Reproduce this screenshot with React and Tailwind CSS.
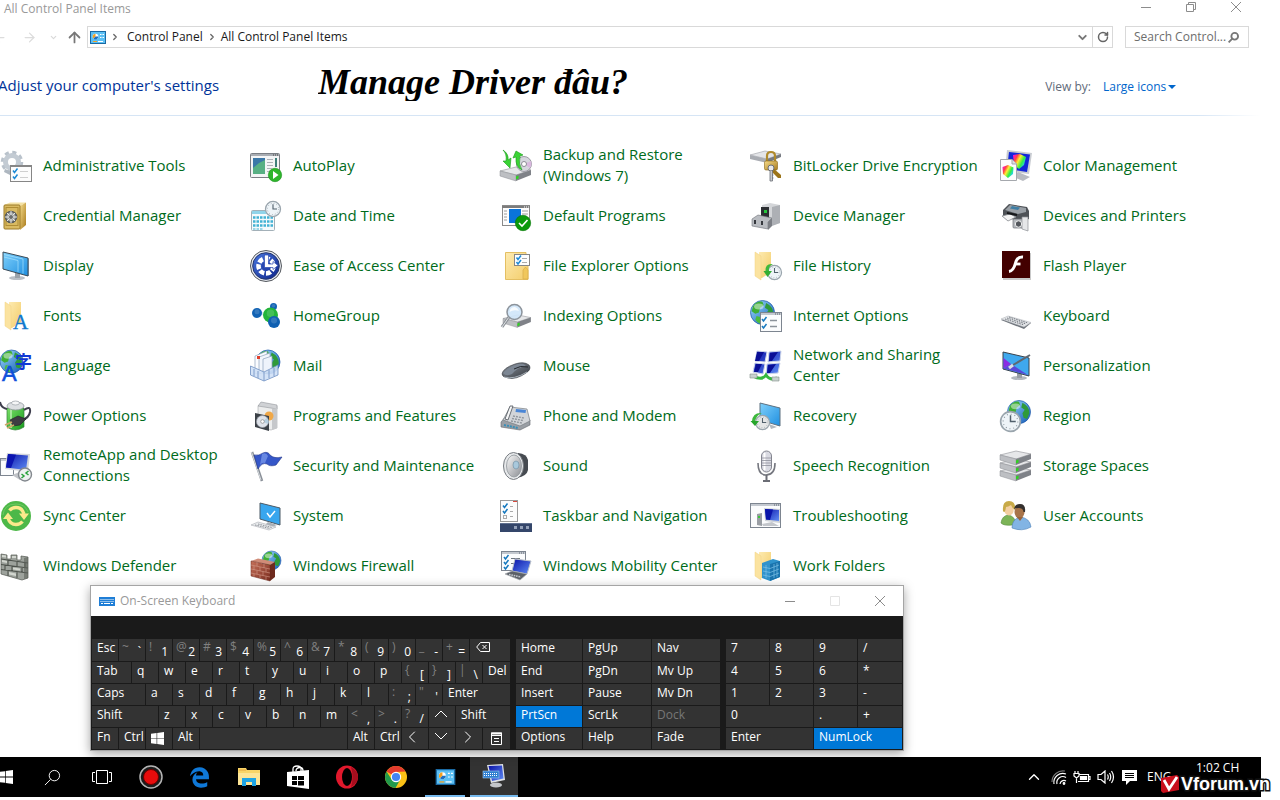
import { FaEdgeLegacy } from "react-icons/fa";
import {
  ArrowLeft,
  ArrowRight,
  ArrowUp,
  ChevronDown,
  ChevronLeft,
  ChevronRight,
  ChevronUp,
  RotateCw,
  Search,
} from "lucide-react";

/* shared gradients, referenced by id from every icon */
function Gradients() {
  const list = [
    ["sea", "#9fe0fb", "#1258b8"],
    ["screen", "#7fd0fb", "#1f8fe0"],
    ["navy", "#0a12a8", "#5f8df5"],
    ["gold", "#f6dc8a", "#a87a1c"],
    ["folder", "#fdeab0", "#f3cd6a"],
    ["steel", "#fafafa", "#8b8e94"],
    ["dark", "#8d939b", "#33383f"],
    ["green", "#7ae068", "#169a1c"],
    ["access", "#4a78e0", "#0c2288"],
    ["brick", "#c4705a", "#7c2e20"],
  ];
  return (
    <svg className="absolute h-0 w-0" aria-hidden="true">
      <defs>
        {list.map(([id, from, to]) => (
          <linearGradient key={id} id={id} x1="0" y1="0" x2="1" y2="1">
            <stop offset="0" stopColor={from} />
            <stop offset="1" stopColor={to} />
          </linearGradient>
        ))}
        <linearGradient id="spectrum" x1="0" y1="0" x2="1" y2="0.6">
          <stop offset="0" stopColor="#f0f" />
          <stop offset="0.3" stopColor="#f44" />
          <stop offset="0.5" stopColor="#fe3" />
          <stop offset="0.75" stopColor="#3e4" />
          <stop offset="1" stopColor="#2cf" />
        </linearGradient>
      </defs>
    </svg>
  );
}

/* pieces used by several icons */
function Globe({ cx, cy, r }) {
  return (
    <g transform={`translate(${cx} ${cy}) scale(${r / 10})`}>
      <circle r="10" fill="url(#sea)" stroke="#1c56a8" strokeWidth="0.6" />
      <path d="M-8 -5 Q-5 -10 0 -9 L1 -6 L-2 -4 L-3 0 L-6 1 L-9 -1Z" fill="#3fae35" />
      <path d="M3 -8 Q9 -5 9 1 L7 6 L4 5 L3 1 L5 -2 L2 -4Z" fill="#2f9a3a" />
      <path d="M-5 3 L-1 4 L1 7 L-2 9.4 Q-5 8 -6 6Z" fill="#4cbc3c" />
      <ellipse cx="-3" cy="-5" rx="4" ry="2.5" fill="#fff" opacity="0.45" />
    </g>
  );
}

function Clock({ cx, cy, r, face = "#eef4f8" }) {
  return (
    <g transform={`translate(${cx} ${cy}) scale(${r / 10})`} fill="none">
      <circle r="9.4" fill={face} stroke="#9aa5ad" strokeWidth="1.6" />
      <circle r="7" stroke="#8d979f" strokeWidth="1" strokeDasharray="1 2.66" />
      <path d="M0 -6 V0 H5" stroke="#51606c" strokeWidth="1.4" />
    </g>
  );
}

function Tick({ x, y, color = "#1d8ad6" }) {
  return (
    <path
      d={`M${x} ${y + 2} l1.5 2 l3 -4`}
      fill="none"
      stroke={color}
      strokeWidth="1.5"
    />
  );
}

function Pane({ x, y, w, h }) {
  return (
    <g>
      <rect x={x + 0.5} y={y + 0.5} width={w - 1} height={h - 1} fill="#fbfcfd" stroke="#7d8590" />
      <rect x={x + 1} y={y + 1} width={w - 2} height="2" fill="#c3c8cf" />
      <path d={`M${x + w - 7} ${y + 2} h5`} stroke="#5b6470" strokeDasharray="1 1" />
    </g>
  );
}

function Folder() {
  return (
    <g>
      <path d="M9 2 H21 V22 L12 28 H9Z" fill="url(#folder)" />
      <path d="M5 2 L11 6 V30 L5 26Z" fill="#fbe3a0" stroke="#f0d080" strokeWidth="0.5" />
    </g>
  );
}

function Drive({ y }) {
  return (
    <g>
      <path d={`M0 ${y + 4} L16 ${y} L31 ${y + 3} L16 ${y + 8}Z`} fill="#e6e7e9" stroke="#8f9196" strokeWidth="0.6" />
      <path d={`M0 ${y + 4} L16 ${y + 8} V${y + 14} L0 ${y + 9}Z`} fill="#bdbfc3" stroke="#8f9196" strokeWidth="0.5" />
      <path d={`M16 ${y + 8} L31 ${y + 3} V${y + 8} L16 ${y + 14}Z`} fill="#7f8288" />
      <path d={`M16 ${y + 9.5} l2.5 -1 v3 l-2.5 1z`} fill="#2fd321" />
    </g>
  );
}

function Globule({ cx, cy, r, fill }) {
  return (
    <g>
      <circle cx={cx} cy={cy} r={r} fill={fill} />
      <circle cx={cx} cy={cy - r / 4} r={r / 2} fill="#fff" opacity="0.15" />
    </g>
  );
}

const icons = {
  admin: (
    <>
      <circle cx="12" cy="12" r="9.5" fill="none" stroke="#b9c2cb" strokeWidth="3.5" strokeDasharray="4 3.46" />
      <circle cx="12" cy="12" r="6.5" fill="none" stroke="#c3cbd3" strokeWidth="5" />
      <path d="M5 19 L10 21 V25 L4 22Z" fill="#aeb7c0" />
      <rect x="10.5" y="15.5" width="21" height="16" fill="#fcfcfc" stroke="#868686" />
      <path d="M11 16 H31" stroke="#868686" strokeWidth="2" />
      <Tick x={13} y={18.5} />
      <Tick x={13} y={24.5} />
      <path d="M20 21.5 H28 M20 27.5 H28" stroke="#cfcfcf" />
    </>
  ),
  autoplay: (
    <>
      <rect x="0.5" y="3.5" width="29" height="24" rx="1" fill="#f4f5f6" stroke="#7a7e84" />
      <path d="M1 5 H29" stroke="#a9adb3" strokeWidth="2" />
      <path d="M23 5 h5" stroke="#444" strokeDasharray="1 1" />
      <rect x="3" y="8" width="12" height="16" fill="#3b78a8" />
      <path d="M3 18 L9 13 L15 10 V24 H3Z" fill="#58b084" />
      <path d="M17 9.5 h6 M17 12.5 h6 M17 15.5 h6 M17 18.5 h5 M17 21.5 h3" stroke="#aeb2b7" />
      <rect x="25" y="8" width="2" height="9" fill="#3f7f7a" />
      <circle cx="25" cy="25" r="6.7" fill="#2db52a" stroke="#1d9020" strokeWidth="0.6" />
      <path d="M23 21 L28.5 25 L23 29Z" fill="#fff" />
    </>
  ),
  backup: (
    <>
      <Drive y={17} />
      <circle cx="24" cy="14" r="7.5" fill="#d6d6de" stroke="#9c9ca4" />
      <path d="M24 14 L31 11 A7.5 7.5 0 0 1 30 18Z" fill="#d9b8de" />
      <circle cx="24" cy="14" r="2.5" fill="#fff" stroke="#8c8c94" />
      <path d="M3 0 Q9 4 8 10 L11 8 L10 18 L3 11 L6 11 Q7 4 3 0Z" fill="#3ad335" stroke="#189a1a" strokeWidth="0.6" />
      <path d="M13 8 L16 1 L23 5 L20 6 Q18 14 22 20 Q15 17 16 7Z" fill="#3ad335" stroke="#189a1a" strokeWidth="0.6" />
    </>
  ),
  bitlocker: (
    <>
      <path d="M0 5 L15 1 L31 4 L17 9Z" fill="#e4e5e8" stroke="#9c9ea4" strokeWidth="0.6" />
      <path d="M0 5 L17 9 V13 L0 9Z" fill="#a9acb2" />
      <path d="M17 9 L31 4 V7 L17 13Z" fill="#777b82" />
      <path d="M17 12 V6 Q17 2 21 2 Q25 2 25 6 V12" fill="none" stroke="#b08a2c" strokeWidth="2.2" />
      <rect x="14.5" y="11" width="13" height="9" rx="1.5" fill="url(#gold)" stroke="#8c6414" strokeWidth="0.6" />
      <path d="M23 18 L31 25 V28 H28 L21 21Z" fill="#9c7418" />
      <circle cx="21" cy="18" r="3" fill="#e8e9ec" stroke="#6b6f76" />
      <path d="M20 21 V31 H22.5 V21 M22 25 h1.5 M22 28 h1.5" fill="#c8cace" stroke="#6b6f76" strokeWidth="0.8" />
    </>
  ),
  color: (
    <>
      <path d="M7 0 L32 3 L29 24 L5 21Z" fill="#c9ccd2" />
      <path d="M9 2 L30 4.5 L27 22 L7 19Z" fill="#1327d8" />
      <path d="M18 22 L30 27 L23 31 L14 27Z" fill="#b8bbc1" />
      <path d="M13 5 L20 4 L26 7 L24 15 L19 19 L14 15Z" fill="url(#spectrum)" />
      <path d="M0.5 9.5 H12 L16.5 14 V30.5 H0.5Z" fill="#fcfcfd" stroke="#a5a8ad" />
      <path d="M12 9.5 V14 H16.5" fill="#dfe1e4" stroke="#a5a8ad" />
      <path d="M2.5 17 L8 15 L13.5 17.5 L13 24 L8 28 L3 24Z" fill="url(#spectrum)" />
    </>
  ),
  credential: (
    <>
      <path d="M4 5 L10 2.5 H26 L20 6Z" fill="#f4e2a4" />
      <path d="M20 6 L26 2.5 V25 L20 30Z" fill="url(#gold)" />
      <rect x="4" y="5" width="16" height="24" rx="1" fill="#d9ba62" stroke="#9c7a26" />
      <rect x="6" y="7.5" width="12" height="18" fill="none" stroke="#b08d34" />
      <circle cx="11" cy="17" r="5.5" fill="#a4a6a6" stroke="#595b5b" strokeWidth="1.6" />
      <path d="M11 11 V23 M5 17 H17 M7 13 L15 21 M15 13 L7 21" stroke="#e6e8e8" />
      <circle cx="11" cy="17" r="2" fill="#6b6d6d" />
    </>
  ),
  date: (
    <>
      <rect x="1.5" y="10.5" width="23" height="20" rx="1" fill="#f6fafc" stroke="#a3b0b8" />
      <rect x="2" y="11" width="22" height="3" fill="#90d4ea" />
      <path d="M3 17.5 H23 M3 21.5 H23 M3 25.5 H23" stroke="#43b2d4" strokeWidth="2.5" strokeDasharray="2.5 1" />
      <path d="M3 29 H13" stroke="#43b2d4" strokeDasharray="2.5 1" />
      <Clock cx={23} cy={9} r={8} />
    </>
  ),
  defaults: (
    <>
      <rect x="2.5" y="5.5" width="27" height="20" fill="#fdfdfd" stroke="#8a8a8a" />
      <path d="M2 7 H30" stroke="#7c7c7c" strokeWidth="2" />
      <path d="M24 7 h5" stroke="#fff" strokeDasharray="1 1" />
      <rect x="9" y="9" width="12" height="14" fill="#0a74da" />
      <path d="M4 11 h3 M4 14 h3 M4 17 h3 M4 20 h3 M22 11 h6 M22 14 h6" stroke="#9c9c9c" />
      <circle cx="23" cy="23" r="7.7" fill="#0b9a0b" stroke="#057505" strokeWidth="0.6" />
      <path d="M19 23 L22 26 L27.5 20" fill="none" stroke="#fff" strokeWidth="1.6" />
    </>
  ),
  device: (
    <>
      <path d="M12 5 L20 3 L30 5 V23 L20 26 L12 20Z" fill="#d4d6d9" />
      <path d="M22 7 L30 5 V23 L22 26Z" fill="#adb0b5" />
      <path d="M11 7 L19 7 V18 L11 17Z" fill="#2c2f32" />
      <rect x="14" y="10" width="3" height="3" fill="#25c73c" />
      <path d="M2 19 L8 15 L22 18 L18 22 V29 L2 26Z" fill="#b9bcc1" stroke="#6f7278" strokeWidth="0.6" />
      <path d="M18 22 L22 18 V26 L18 30Z" fill="#7b7e84" />
      <path d="M5 20 v4 M12 21 v4" stroke="#35383d" strokeWidth="2" />
    </>
  ),
  printers: (
    <>
      <path d="M3 10 L9 4 L27 7 L29 11 V19 L20 22 L3 16Z" fill="#4e5257" />
      <path d="M5 10 L10 5 L26 8 L26 12 L18 14Z" fill="#9aa0a6" />
      <path d="M12 6 L20 7.5 L18 10 L10 8.5Z" fill="#3f7ea4" />
      <path d="M2 16 L10 14 L16 17 L8 21Z" fill="#f4f4f4" stroke="#85898e" strokeWidth="0.8" />
      <path d="M7 13 L17 15" stroke="#16181a" strokeWidth="2" />
      <rect x="13" y="19" width="14" height="9" rx="1" fill="#b5b9bd" stroke="#6d7176" strokeWidth="0.7" />
      <path d="M22 17 H28 V31 L22 29Z" fill="#e6e7e9" stroke="#8e9196" strokeWidth="0.7" />
      <circle cx="18.5" cy="24" r="3.2" fill="#53575c" stroke="#eee" />
    </>
  ),
  display: (
    <>
      <ellipse cx="17" cy="28" rx="8" ry="2" fill="#b9bfc6" />
      <path d="M15 23 H20 V28 H15Z" fill="#9aa2aa" />
      <path d="M3 2 L28 8 V26 L3 19Z" fill="url(#screen)" stroke="#3c4a56" />
      <path d="M4 7 L18 10.5 V22 M4 4.5 L23 9 V23.5" fill="none" stroke="#a8e2fd" strokeWidth="0.7" />
      <path d="M28 8 L29 9 V26 L28 26Z" fill="#6d7a86" />
    </>
  ),
  access: (
    <>
      <circle cx="16" cy="16" r="15.5" fill="#e6e9ee" stroke="#55595f" />
      <circle cx="16" cy="16" r="13.3" fill="url(#access)" stroke="#26376e" />
      <circle cx="16" cy="16" r="7.5" fill="none" stroke="#fff" strokeWidth="4.6" strokeDasharray="5 1.73" />
      <circle cx="16" cy="16" r="4" fill="#2746b0" />
      <path d="M14.5 5 L18.5 5 V14 H23 V11.5 L28 15.5 L23 19.5 V17.5 H14.5Z" fill="#fff" stroke="#2746b0" strokeWidth="0.7" />
    </>
  ),
  explorer: (
    <>
      <path d="M5.5 2.5 H26 V6 H28 V29.5 H5.5Z" fill="url(#folder)" stroke="#e4bf62" />
      <path d="M23 29 V20 L25.5 17 L28 20 V29Z" fill="#f0c75c" stroke="#d8ae48" strokeWidth="0.7" />
      <rect x="14.5" y="4.5" width="15" height="11" fill="#fdfdfd" stroke="#868686" />
      <Tick x={16.5} y={5.5} />
      <Tick x={16.5} y={10} />
      <path d="M22 8.5 h5 M22 12.5 h5" stroke="#aaa" />
    </>
  ),
  history: (
    <>
      <Folder />
      <Clock cx={24.5} cy={22.5} r={7.5} />
      <path d="M14 22 L19 22 Q18 16 23 14 Q15 13 15.5 21Z" fill="#3db83c" />
      <path d="M13.5 21 H22 L17.5 27Z" fill="#35ad34" />
    </>
  ),
  flash: (
    <>
      <rect x="3" y="3" width="28" height="27" fill="#c9c9c9" />
      <rect x="2" y="1" width="28" height="27" fill="#430000" />
      <path d="M23 7 Q17 6.5 15.5 13 Q13.5 21 9 21.5" fill="none" stroke="#fff" strokeWidth="3" />
      <path d="M15 14 H20.5" stroke="#fff" strokeWidth="2.8" />
    </>
  ),
  fonts: (
    <>
      <Folder />
      <text x="13" y="29" fontSize="21" fontFamily="Liberation Serif, serif" fill="#0f78cc" stroke="#0f78cc" strokeWidth="0.4">A</text>
    </>
  ),
  homegroup: (
    <>
      <path d="M7 12.5 L20 15 L24 6" fill="none" stroke="#dbe8f0" strokeWidth="3" />
      <Globule cx={7} cy={13} r={5} fill="#1263b4" />
      <Globule cx={23.5} cy={6.5} r={3.5} fill="#1263b4" />
      <Globule cx={20.5} cy={15} r={7.5} fill="#23b43a" />
      <Globule cx={24} cy={22} r={6} fill="#0f60b2" />
    </>
  ),
  indexing: (
    <>
      <g transform="translate(3 5) scale(0.9)"><Drive y={11} /></g>
      <path d="M9 17 L2 27" stroke="#8c9197" strokeWidth="3" />
      <path d="M9 17 L2 27" stroke="#dfe2e5" />
      <circle cx="14.5" cy="12" r="7.5" fill="#cfe5fa" fillOpacity="0.9" stroke="#8c939b" strokeWidth="1.5" />
      <path d="M9.5 12 Q10 7 15 7 Q18 8 19 11 Q14 9 9.5 12Z" fill="#fff" opacity="0.8" />
    </>
  ),
  internet: (
    <>
      <Globe cx={12.5} cy={12.5} r={12} />
      <Pane x={10} y={12} w={22} h={20} />
      <Tick x={12} y={17} color="#1678be" />
      <Tick x={12} y={24} color="#1678be" />
      <path d="M20 20.5 h7 M20 26.5 h7" stroke="#8b929a" strokeWidth="1.4" />
    </>
  ),
  keyboard: (
    <>
      <path d="M1 20 L8 17 L31 23 L24 29Z" fill="#6f747b" />
      <path d="M1 19 L8 16 L31 22.5 L24 27Z" fill="#e4e6e9" stroke="#a9adb3" strokeWidth="0.5" />
      <path d="M5 19 L24 25 M7 18 L26 24 M9 17 L28 23" stroke="#6b7078" strokeWidth="0.9" strokeDasharray="1.6 0.9" />
    </>
  ),
  language: (
    <>
      <Globe cx={11.5} cy={11.5} r={11.5} />
      <text x="15" y="18" fontSize="17" fontWeight="bold" fontFamily="Noto Sans CJK JP, sans-serif" fill="#1238d4">字</text>
      <text x="2" y="31" fontSize="22" fontFamily="Liberation Sans, sans-serif" fill="#0f50dc" stroke="#0f50dc" strokeWidth="0.6">A</text>
    </>
  ),
  mail: (
    <>
      <Globe cx={18} cy={12} r={12} />
      <path d="M5 6 L17 1 V20 L5 24Z" fill="#fafcff" stroke="#8ca0bc" strokeWidth="0.7" />
      <path d="M9 7 L20 3 V20 L9 24Z" fill="#f2f6fc" stroke="#8ca0bc" strokeWidth="0.7" />
      <path d="M13 9 L22 6 V20 L13 24Z" fill="#eef3fb" stroke="#8ca0bc" strokeWidth="0.7" />
      <rect x="7" y="6" width="3" height="3" fill="#e0402c" />
      <path d="M0.5 16 L14 22 L28 15 V25 L14 31 L0.5 25Z" fill="#cfe0f6" stroke="#6d8fc2" strokeWidth="0.8" fillOpacity="0.9" />
      <path d="M14 22 V31 M4 19 V26 M8 21 V28 M19 20 V28 M24 18 V26" stroke="#7f9cca" />
    </>
  ),
  mouse: (
    <>
      <path d="M2 24 Q3 18 15 14 Q24 11 29 15 Q32 19 26 23 Q16 30 8 28 Q2 27 2 24Z" fill="url(#dark)" stroke="#32373e" strokeWidth="0.6" />
      <path d="M3 23 Q8 17 18 14 Q24 13 26 16 Q18 17 12 24 Q6 27 3 23Z" fill="#7d8794" />
      <path d="M14 19 Q20 15 28 17" stroke="#24282d" fill="none" />
      <path d="M4 27 Q14 30 27 22" stroke="#c3cbd4" fill="none" strokeWidth="0.8" />
    </>
  ),
  network: (
    <>
      <path d="M7 1 L17 2 L15 12 L5 11Z M19 2 L31 1 L30 11 L18 12Z M5 13 L15 14 L13 24 L3 22Z M17 14 L30 13 L28 23 L16 24Z" fill="url(#navy)" stroke="#cdd6ea" />
      <path d="M7 2 L14 2 L9 11 H5Z M20 3 L28 2 L22 11 H19Z M6 14 L12 14 L8 22 H4Z M18 15 L26 14 L20 23 H17Z" fill="#0a0f96" />
      <path d="M3 26 Q12 31 16 25 Q20 31 27 28" fill="none" stroke="#35b93e" strokeWidth="3" />
      <path d="M0 24 h7 v4 h-7z M22 27 h7 v4 h-7z" fill="#c9d2cf" stroke="#85908c" strokeWidth="0.6" />
    </>
  ),
  personalization: (
    <>
      <ellipse cx="19" cy="28" rx="8" ry="2" fill="#b2b7be" />
      <path d="M17 23 H22 V28 H17Z" fill="#979da5" />
      <path d="M3 2 L29 8 V26 L3 19Z" fill="#3fa8ee" stroke="#39424c" />
      <path d="M3.5 8 L11 14 L3.5 18.5Z" fill="#8a2be2" />
      <path d="M11 14 L28 25 L3.5 18.5Z" fill="#5a47d8" />
      <path d="M30 5 L13 15" stroke="#5f6770" strokeWidth="2" />
      <path d="M13 15 L9 18" stroke="#d9dde2" strokeWidth="3" />
    </>
  ),
  power: (
    <>
      <path d="M7 8 V27 Q15 33 24 27 V8Z" fill="url(#green)" stroke="#35803a" strokeWidth="0.7" />
      <path d="M11 9 V28" stroke="#d4f8cc" strokeWidth="2" opacity="0.6" />
      <ellipse cx="15.5" cy="6" rx="8.5" ry="4" fill="#dcdfe2" stroke="#8e949a" strokeWidth="0.8" />
      <ellipse cx="15.5" cy="3" rx="4" ry="2" fill="#f5f6f7" stroke="#9aa0a6" strokeWidth="0.7" />
      <path d="M0 2 Q1 8 7 9 M24 10 Q31 5 30 12 Q29 18 22 20" fill="none" stroke="#3d3d4c" strokeWidth="2" />
      <path d="M10 20 L18 16 L26 19 L20 25 L13 26Z" fill="#3d3d42" stroke="#1f1f24" strokeWidth="0.6" />
      <path d="M12 22 L5 25 M14 25 L7 28" stroke="#cfa868" strokeWidth="1.8" />
    </>
  ),
  programs: (
    <>
      <path d="M8 6 L12 3 L27 6 V28 L21 30 L8 27Z" fill="#eceded" stroke="#a5a8ab" strokeWidth="0.6" />
      <path d="M8 6 L11 2 L27 5 V9Z" fill="#d0d2d5" stroke="#96999d" strokeWidth="0.6" />
      <path d="M22 9 L27 8 V28 L22 30Z" fill="#c6c8cb" />
      <circle cx="19" cy="16" r="4.5" fill="#f0a848" />
      <path d="M5 13 L19 16 V31 L5 27Z" fill="#3c4147" />
      <circle cx="12.5" cy="21.5" r="6" fill="#dfe3ea" stroke="#989ea8" strokeWidth="0.7" />
      <path d="M12.5 21.5 L17 18 A6 6 0 0 1 18 24Z" fill="#b6cfe0" />
      <circle cx="12.5" cy="21.5" r="1.8" fill="#fff" stroke="#777" strokeWidth="0.6" />
    </>
  ),
  phone: (
    <>
      <path d="M1 22 L7 15 L30 20 V25 L20 30 L1 27Z" fill="#9a9fa5" stroke="#62676d" strokeWidth="0.6" />
      <path d="M4 25 L18 28" stroke="#3a8fb8" strokeWidth="2" strokeDasharray="2 1" />
      <path d="M3 20 L10 7 L27 9 L30 21 L20 26Z" fill="#d2d5d9" stroke="#777c82" strokeWidth="0.7" />
      <path d="M16 9 L26 10 L25.5 13 L15.5 12Z" fill="#4a86d6" />
      <path d="M13 16 L24 18 M12 18.5 L23 20.5 M11 21 L22 23" stroke="#8f959c" strokeWidth="1.4" strokeDasharray="2 1" />
      <path d="M5 19 L10 6 L13 6 L8 20Z" fill="#f5f6f7" stroke="#4d5259" strokeWidth="0.8" />
    </>
  ),
  recovery: (
    <>
      <path d="M10 3 L30 8 V26 L10 20Z" fill="url(#screen)" stroke="#5d7080" />
      <path d="M19 24 L27 27 L21 29Z" fill="#b4b9be" />
      <Clock cx={12.5} cy={22.5} r={7.5} face="#e4e6e6" />
      <path d="M1 22 L5 22 Q6 15 12 13 Q3 12 2 21Z" fill="#3db83c" />
      <path d="M0.5 21 H9 L5 26Z" fill="#27a52c" />
    </>
  ),
  region: (
    <>
      <Globe cx={19} cy={12} r={11.5} />
      <Clock cx={10.5} cy={21.5} r={10.5} />
    </>
  ),
  remote: (
    <>
      <Pane x={0} y={8} w={14} h={18} />
      <path d="M7 3 L30 4 L28 22 L5 19Z" fill="#d3d6db" />
      <path d="M8 4 L28 5.5 L26 20 L6 17.5Z" fill="url(#navy)" />
      <path d="M8 4 L16 4.7 L11 18 L6 17.5Z" fill="#0b14b0" />
      <path d="M12 25 L22 21 L28 26 L20 30Z" fill="#c1c4c9" />
      <circle cx="25" cy="24.5" r="6.5" fill="#eef1f1" stroke="#84898f" strokeWidth="1.4" />
      <path d="M21.5 24 L24 26 L21.5 28 M28.5 21 L26 23 L28.5 25" fill="none" stroke="#27a03a" strokeWidth="1.5" />
    </>
  ),
  security: (
    <>
      <path d="M2 2 L12 31" stroke="#8a9098" strokeWidth="2.6" />
      <path d="M1.5 2 L11 30" stroke="#e0e3e6" strokeWidth="0.9" />
      <path d="M4 5 Q9 6 13 3 Q18 1 20 5 Q24 9 32 7 Q29 11 26 15 Q20 17 17 14 Q12 12 8 19Z" fill="#3557c8" stroke="#1e3286" strokeWidth="0.6" />
      <path d="M12 4 Q16 2 18 6 L15 13 Q12 12 10 15Z" fill="#7f9cec" opacity="0.7" />
    </>
  ),
  sound: (
    <>
      <path d="M18 3 Q27 4 28 10 V20 Q27 26 17 28Z" fill="#464b51" />
      <ellipse cx="13.5" cy="16" rx="10" ry="13.5" fill="#e6e8ea" stroke="#767b81" />
      <ellipse cx="14" cy="16" rx="7.5" ry="11" fill="url(#steel)" stroke="#8f959b" strokeWidth="0.8" />
      <ellipse cx="16" cy="15" rx="3" ry="4" fill="#a8c8dc" stroke="#6d8ca0" strokeWidth="0.6" />
    </>
  ),
  speech: (
    <>
      <path d="M8 13 Q8 25 16 25 Q25 25 25 13" fill="none" stroke="#75777f" strokeWidth="1.6" />
      <path d="M16.5 25 V30 M13 31 H20" stroke="#6b6d75" strokeWidth="2" />
      <rect x="11.5" y="1" width="10" height="21" rx="5" fill="#d9dae2" stroke="#83858f" />
      <path d="M14.5 3 V20" stroke="#fff" strokeWidth="2" />
      <path d="M12 8 H21 M12 10.5 H21 M12 13 H21 M12 15.5 H21" stroke="#8f919c" strokeWidth="0.8" />
    </>
  ),
  storage: (
    <>
      <Drive y={17} />
      <Drive y={9} />
      <Drive y={1} />
    </>
  ),
  sync: (
    <>
      <circle cx="16" cy="16" r="15" fill="#4db848" />
      <path d="M3 15 Q4 4 16 4 Q25 4 28 12" fill="none" stroke="#7ccf6c" opacity="0.7" />
      <path d="M9.5 10.5 Q12 7.5 16 7.5 Q22 7.500 24 14" fill="none" stroke="#fbe98c" strokeWidth="3.4" />
      <path d="M22.5 21.5 Q20 24.500 16 24.500 Q10 24.500 8 18" fill="none" stroke="#fbe98c" strokeWidth="3.4" />
      <path d="M3 19 L8 12.5 L13 19Z M29 13.5 L24 20 L19 13.5Z" fill="#fbe98c" />
    </>
  ),
  system: (
    <>
      <path d="M10 3 L30 8 V25 L10 19Z" fill="#38a6ee" stroke="#4b5a66" />
      <path d="M17 13 L20 17 L25 11" fill="none" stroke="#fff" strokeWidth="1.4" />
      <path d="M18 22 L27 25 L22 27 L15 25Z" fill="#a9b0b7" />
      <path d="M1 25 L8 22 L26 27 L19 30Z" fill="#e9ebed" stroke="#a9adb3" strokeWidth="0.6" />
      <path d="M5 25 L20 28.5 M8 24 L22 27.5" stroke="#8f949b" strokeDasharray="1.6 0.9" />
    </>
  ),
  taskbar: (
    <>
      <rect x="0.5" y="0.5" width="17" height="21" fill="#fcfcfc" stroke="#9a9a9a" />
      <path d="M13 1.5 h4" stroke="#d8483c" />
      <Tick x={3} y={3.5} color="#1678be" />
      <Tick x={3} y={9} color="#1678be" />
      <rect x="3.5" y="15.5" width="3" height="3" fill="none" stroke="#aaa" />
      <path d="M10 6.5 h3 M10 11.5 h3 M10 16.5 h3" stroke="#aaa" />
      <rect y="23" width="32" height="9" fill="#34466a" />
      <path d="M0 23.5 H32" stroke="#60708f" />
      <path d="M14 26 h3 v3 h-3z M20 26 h3 v3 h-3z M26 26 h3 v3 h-3z" fill="#93a0b8" />
    </>
  ),
  troubleshooting: (
    <>
      <Pane x={0} y={3} w={31} h={25} />
      <path d="M14 8 L30 9 V23 L15 21Z" fill="#ced2d8" />
      <path d="M15 9 L29 10 V21 L16 19.5Z" fill="url(#navy)" />
      <path d="M15 9 L23 9.6 L20 20 L16 19.5Z" fill="#0a14aa" />
      <path d="M7 14 L12 13 V26 L7 25Z" fill="#9a9ea4" />
      <path d="M12 24 L22 22 L29 26 H13Z" fill="#c3c6cb" />
      <rect x="8" y="16" width="2" height="2" fill="#38c838" />
    </>
  ),
  users: (
    <>
      <path d="M1 23 Q2 16 8 15 Q15 16 16 24 L12 25 Q4 26 1 23Z" fill="#7cb457" stroke="#53893a" strokeWidth="0.6" />
      <ellipse cx="9" cy="9.5" rx="4.8" ry="6" fill="#f3cfa2" />
      <path d="M3 11 Q2 1 9 1 Q16 1 15 10 Q12 8 11 5 Q8 7 6 7 Q5 14 3 11Z" fill="#c8aa48" />
      <path d="M12 28 Q12 19 20 17 Q30 18 31 27 Q22 32 12 28Z" fill="#82b4e4" stroke="#4d82b8" strokeWidth="0.6" />
      <ellipse cx="19.5" cy="12" rx="5" ry="6.5" fill="#a8744a" />
      <path d="M14 9 Q15 4 20 4 Q26 4 25 12 L23.5 12 Q23 8 19 8 Q16 8 14 9Z" fill="#34302e" />
      <path d="M17 17 L20 21 L23 17Z" fill="#96633c" />
    </>
  ),
  defender: (
    <>
      <path d="M1 4 L7 5 V9 L11 9 V5 L17 5 V10 L21 10 V6 L28 7 V28 L22 30 L1 24Z" fill="#9da29c" stroke="#51564f" strokeWidth="0.7" />
      <path d="M1 9 L28 13 M1 14.5 L28 18 M1 19.5 L28 23 M8 10 V15 M17 12 V17 M12 16 V21 M22 17 V22 M5 15 V20 M8 21 V26 M17 22 V28 M25 13 V17" stroke="#4d524c" strokeWidth="1.1" fill="none" />
      <path d="M2 10 L7 11 V13 L2 12Z M13 17.5 L20 18.5 V20.5 L13 19.5Z M18 7 h2 M9 22 L16 23.5 V26 L9 24.5Z M2 5 L6 5.5 V7.5 L2 7Z M12 6 L16 6 V8 H12Z" fill="#d2d6cf" />
      <path d="M24 8 L28 7 V28 L24 29Z" fill="#5d625b" opacity="0.6" />
    </>
  ),
  firewall: (
    <>
      <Globe cx={21.5} cy={10.5} r={9.5} />
      <path d="M1 11 L8 8.5 L25 12 L20 15Z" fill="#d08c78" />
      <path d="M20 15 L25 12 V27 L20 31Z" fill="#6e2a1e" />
      <path d="M1 11 L20 15 V31 L1 26Z" fill="url(#brick)" stroke="#6a2a1e" strokeWidth="0.5" />
      <path d="M1 15 L20 19 M1 19 L20 23 M1 23 L20 27 M7 12.5 V16 M14 14 V18 M4 16 V20 M10 17 V21 M16 18.5 V22 M7 20.5 V24 M13 21.5 V25.5 M4 24 V26.5 M10 25 V28 M16 26.5 V30" stroke="#d39a8a" strokeWidth="0.6" />
    </>
  ),
  mobility: (
    <>
      <Pane x={1} y={1} w={25} h={20} />
      <Tick x={4} y={5} color="#1678be" />
      <Tick x={4} y={10} color="#1678be" />
      <Tick x={4} y={15} color="#1678be" />
      <path d="M11 8.5 h9 M11 13.5 h4" stroke="#6f7780" />
      <path d="M15 9 L31 11 L27 24 L12 21Z" fill="url(#navy)" stroke="#bcc2ca" />
      <path d="M5 24 L12 21 L27 24 L20 30Z" fill="#5c6168" stroke="#a9adb3" strokeWidth="0.7" />
      <path d="M9 24.5 L21 27" stroke="#c5c9ce" strokeDasharray="1.6 0.8" strokeWidth="1.5" />
    </>
  ),
  work: (
    <>
      <Folder />
      <path d="M12 13 L23 9 L30 11 V27 L20 31 L12 28Z" fill="#2f93cc" />
      <path d="M20 14 L30 11 V27 L20 31Z" fill="#1a74ae" />
      <path d="M13 17 L20 18.5 L29 15 M13 21 L20 22.5 L29 19 M13 25 L20 26.5 L29 23 M16 15 V28 M24 14 V28 M27 13 V27" fill="none" stroke="#7cc2e6" strokeWidth="0.7" />
    </>
  ),
};

const items = [
  ["admin", "Administrative Tools"],
  ["autoplay", "AutoPlay"],
  ["backup", "Backup and Restore (Windows 7)"],
  ["bitlocker", "BitLocker Drive Encryption"],
  ["color", "Color Management"],
  ["credential", "Credential Manager"],
  ["date", "Date and Time"],
  ["defaults", "Default Programs"],
  ["device", "Device Manager"],
  ["printers", "Devices and Printers"],
  ["display", "Display"],
  ["access", "Ease of Access Center"],
  ["explorer", "File Explorer Options"],
  ["history", "File History"],
  ["flash", "Flash Player"],
  ["fonts", "Fonts"],
  ["homegroup", "HomeGroup"],
  ["indexing", "Indexing Options"],
  ["internet", "Internet Options"],
  ["keyboard", "Keyboard"],
  ["language", "Language"],
  ["mail", "Mail"],
  ["mouse", "Mouse"],
  ["network", "Network and Sharing Center"],
  ["personalization", "Personalization"],
  ["power", "Power Options"],
  ["programs", "Programs and Features"],
  ["phone", "Phone and Modem"],
  ["recovery", "Recovery"],
  ["region", "Region"],
  ["remote", "RemoteApp and Desktop Connections"],
  ["security", "Security and Maintenance"],
  ["sound", "Sound"],
  ["speech", "Speech Recognition"],
  ["storage", "Storage Spaces"],
  ["sync", "Sync Center"],
  ["system", "System"],
  ["taskbar", "Taskbar and Navigation"],
  ["troubleshooting", "Troubleshooting"],
  ["users", "User Accounts"],
  ["defender", "Windows Defender"],
  ["firewall", "Windows Firewall"],
  ["mobility", "Windows Mobility Center"],
  ["work", "Work Folders"],
];

function ControlPanelIcon({ className }) {
  return (
    <svg viewBox="0 0 16 13" className={className} aria-hidden="true">
      <rect x="0.5" y="0.5" width="15" height="12" fill="#5cc0f4" stroke="#1a6aa4" />
      <circle cx="5.5" cy="5.5" r="2.8" fill="#fff" />
      <path d="M5.5 5.5 V2.7 A2.8 2.8 0 0 0 3.5 7.5Z" fill="#f4a020" />
      <path d="M5.5 5.5 L3.5 7.5 A2.8 2.8 0 0 0 8.3 5.5Z" fill="#1f6fc0" />
      <path d="M10 3.5 h1.5 M12.5 3.5 h1.5 M10 6.5 h1.5 M12.5 6.5 h1.5" stroke="#fff" />
      <path d="M3 10.5 h4" stroke="#f4a020" />
      <path d="M8 10.5 h5" stroke="#fff" />
    </svg>
  );
}

function WindowsLogo({ className }) {
  return (
    <svg viewBox="0 0 14 14" className={className} aria-hidden="true">
      <path d="M0 2 L6 1.2 V6.6 H0Z M6.7 1.1 L14 0 V6.6 H6.7Z M0 7.4 H6 V12.8 L0 12Z M6.7 7.4 H14 V14 L6.7 12.9Z" fill="#fff" />
    </svg>
  );
}

function MinimizeGlyph() {
  return (
    <svg viewBox="0 0 12 12" className="size-3" fill="none" stroke="#8c8c8c">
      <path d="M1 6.5 H11" />
    </svg>
  );
}

function CloseGlyph() {
  return (
    <svg viewBox="0 0 12 12" className="size-3" fill="none" stroke="#8c8c8c">
      <path d="M1 1 L11 11 M11 1 L1 11" />
    </svg>
  );
}

function Magnifier({ className }) {
  return (
    <svg viewBox="0 0 18 18" className={className} fill="none" stroke="currentColor" aria-hidden="true">
      <circle cx="11" cy="7" r="5.5" />
      <path d="M7 11 L1 17" />
    </svg>
  );
}

function TitleBar() {
  return (
    <header className="flex h-[18px] items-center pr-[38px] pl-1">
      <h1 className="flex-1 text-xs text-[#999]">All Control Panel Items</h1>
      <div className="-mt-1 flex gap-[33px]">
        <button aria-label="Minimize"><MinimizeGlyph /></button>
        <button aria-label="Restore">
          <svg viewBox="0 0 12 12" className="size-3" fill="none" stroke="#8c8c8c">
            <path d="M1.5 3.5 H8.5 V10.5 H1.5Z M3.5 3.5 V1.5 H10.5 V8.5 H8.5" />
          </svg>
        </button>
        <button aria-label="Close"><CloseGlyph /></button>
      </div>
    </header>
  );
}

function AddressBar() {
  return (
    <div className="mt-2 flex h-[22px] items-center pr-[31px] text-xs">
      <nav className="flex w-[87px] shrink-0 items-center" aria-label="History">
        <button className="-ml-2" aria-label="Back"><ArrowLeft size={15} className="text-[#dcdcdc]" /></button>
        <button className="ml-[15px]" aria-label="Forward"><ArrowRight size={15} className="text-[#dcdcdc]" /></button>
        <button className="ml-3" aria-label="Recent locations"><ChevronDown size={9} strokeWidth={3} className="text-[#d8d8d8]" /></button>
        <button className="ml-2" aria-label="Up"><ArrowUp size={17} strokeWidth={2.5} className="text-[#777]" /></button>
      </nav>
      <div className="flex h-full flex-1 items-center border border-[#d9d9d9]">
        <ControlPanelIcon className="ml-[2px] h-[13px] w-4" />
        <ChevronRight size={10} strokeWidth={3} className="ml-1 text-[#666]" />
        <a href="#control-panel" className="ml-[7px] text-[#1a1a1a]">Control Panel</a>
        <ChevronRight size={10} strokeWidth={3} className="mx-1 text-[#666]" />
        <a href="#all-items" className="flex-1 text-[#1a1a1a]">All Control Panel Items</a>
        <button className="px-[3px]" aria-label="Previous locations"><ChevronDown size={13} strokeWidth={3.5} className="text-[#777]" /></button>
        <button className="flex h-full w-5 items-center justify-center border-l border-[#d9d9d9]" aria-label="Refresh">
          <RotateCw size={12} strokeWidth={3} className="text-[#666]" />
        </button>
      </div>
      <label className="ml-3 flex h-full w-[124px] items-center border border-[#d9d9d9] px-2">
        <input type="text" placeholder="Search Control..." className="w-[94px] outline-none placeholder:text-[#6d6d6d]" aria-label="Search Control Panel" />
        <Magnifier className="size-[11px] shrink-0 stroke-3 text-[#777]" />
      </label>
    </div>
  );
}

function Heading() {
  return (
    <div className="flex h-[67px] items-center">
      <h2 className="w-[318px] pt-2 text-[15px] text-[#003399]">
        <span className="-ml-[2px]">Adjust your computer's settings</span>
      </h2>
      <p className="h-[38px] flex-1 overflow-hidden font-['Liberation_Serif',serif] text-[36px] leading-[38px] font-bold whitespace-nowrap text-black italic">
        Manage Driver đâu?
      </p>
      <div className="flex items-center pt-2.5 pr-[104px] text-xs">
        <label htmlFor="view-by" className="text-[#5f6b7a]">View by:</label>
        <select id="view-by" className="ml-3 w-[65px] appearance-none text-[#0066cc] outline-none">
          <option>Large icons</option>
        </select>
        <svg viewBox="0 0 8 4" className="h-1 w-2" fill="#0066cc"><path d="M0 0 H8 L4 4Z" /></svg>
      </div>
    </div>
  );
}

function ItemGrid() {
  return (
    <ul className="grid grid-cols-[repeat(auto-fill,250px)] pt-[25px]">
      {items.map(([id, label]) => (
        <li key={id} className="h-[50px]">
          <a href={`#${id}`} className="flex h-full items-center gap-[11px] text-[15px] leading-[21px] text-[#006b1b]">
            <svg viewBox="0 0 32 32" className="size-8 shrink-0 overflow-visible" aria-hidden="true">{icons[id]}</svg>
            <span className="w-[190px] pb-0.5">{label}</span>
          </a>
        </li>
      ))}
    </ul>
  );
}

/* k is the label or glyph name, s the shifted label, w the key's width class */
const W = "w-[26px]";
const typing = [
  [
    { k: "Esc", w: W },
    { k: "`", s: "~", w: W },
    { k: "1", s: "!", w: W },
    { k: "2", s: "@", w: W },
    { k: "3", s: "#", w: W },
    { k: "4", s: "$", w: W },
    { k: "5", s: "%", w: W },
    { k: "6", s: "^", w: W },
    { k: "7", s: "&", w: W },
    { k: "8", s: "*", w: W },
    { k: "9", s: "(", w: W },
    { k: "0", s: ")", w: W },
    { k: "-", s: "_", w: W },
    { k: "=", s: "+", w: W },
    { k: "backspace", w: "w-10" },
  ],
  [
    { k: "Tab", w: "w-[39px]" },
    ..."qwertyuiop".split("").map((k) => ({ k, w: W })),
    { k: "[", s: "{", w: W },
    { k: "]", s: "}", w: W },
    { k: "\\", s: "|", w: W },
    { k: "Del", w: "w-[27px]" },
  ],
  [
    { k: "Caps", w: "w-[53px]" },
    ..."asdfghjkl".split("").map((k) => ({ k, w: W })),
    { k: ";", s: ":", w: W },
    { k: "'", s: '"', w: W },
    { k: "Enter", w: "w-[67px]" },
  ],
  [
    { k: "Shift", w: "w-[66px]" },
    ..."zxcvbnm".split("").map((k) => ({ k, w: W })),
    { k: ",", s: "<", w: W },
    { k: ".", s: ">", w: W },
    { k: "/", s: "?", w: W },
    { k: "up", w: W },
    { k: "Shift", w: "w-[54px]" },
  ],
  [
    { k: "Fn", w: W },
    { k: "Ctrl", w: W },
    { k: "win", w: W },
    { k: "Alt", w: W },
    { k: "space", w: "w-[147px]" },
    { k: "Alt", w: W },
    { k: "Ctrl", w: W },
    { k: "left", w: W },
    { k: "down", w: W },
    { k: "right", w: W },
    { k: "menu", w: "w-[27px]" },
  ],
];

const glyphs = {
  backspace: (
    <svg viewBox="0 0 14 10" className="h-2.5 w-3.5" fill="none" stroke="#fff">
      <path d="M4.5 0.5 H13.5 V9.5 H4.5 L0.7 5Z M6.5 3 L10.5 7 M10.5 3 L6.5 7" />
    </svg>
  ),
  win: <WindowsLogo className="size-[13px]" />,
  up: (
    <svg viewBox="0 0 14 8" className="h-2 w-3.5" fill="none" stroke="#fff"><path d="M1 7 L7 1 L13 7" /></svg>
  ),
  down: (
    <svg viewBox="0 0 14 8" className="h-2 w-3.5" fill="none" stroke="#fff"><path d="M1 1 L7 7 L13 1" /></svg>
  ),
  left: <ChevronLeft size={20} strokeWidth={1.2} />,
  right: <ChevronRight size={20} strokeWidth={1.2} />,
  menu: (
    <svg viewBox="0 0 11 13" className="h-[13px] w-[11px]" fill="none" stroke="#fff">
      <path d="M0.5 1 H10.5 V12.5 H0.5Z M0.5 3.5 H10.5 M3 6.5 H8 M3 9.5 H8" />
      <path d="M0 1.5 H11" strokeWidth="2" />
    </svg>
  ),
  space: null,
};

const glyphPads = {
  backspace: "pl-1.5 pb-1.5",
  win: "pl-[5px]",
  up: "pl-[5px] pb-1.5",
  down: "pl-[5px] pb-1.5",
  left: "pb-1",
  right: "pl-0.5 pb-1",
  menu: "pl-2",
  space: "",
};

function Key({ k, s, w }) {
  if (k in glyphs) {
    return (
      <button aria-label={k} className={`${w} ${glyphPads[k]} flex items-center bg-[#333] text-white`}>
        {glyphs[k]}
      </button>
    );
  }
  if (s) {
    return (
      <button className={`${w} flex justify-between bg-[#333] pr-1 pl-[3px] leading-4 text-white`}>
        <span className="text-[#808080]">{s}</span>
        <span className="pt-[5px]">{k}</span>
      </button>
    );
  }
  return (
    <button className={`${w} flex bg-[#333] pl-[5px] leading-[17px] text-white`}>
      {k}
    </button>
  );
}

const navKeys = [
  "Home", "PgUp", "Nav",
  "End", "PgDn", "Mv Up",
  "Insert", "Pause", "Mv Dn",
  "PrtScn", "ScrLk", "Dock",
  "Options", "Help", "Fade",
];

const padKeys = ["7", "8", "9", "/", "4", "5", "6", "*", "1", "2", "3", "-", "0", ".", "+", "Enter", "NumLock"];

function navTone(k) {
  if (k === "PrtScn") return "bg-[#0078d7] text-white";
  if (k === "Dock") return "bg-[#333] text-[#777]";
  return "bg-[#333] text-white";
}

function padTone(k) {
  if (k === "NumLock") return "col-span-2 bg-[#0078d7]";
  if (k === "0" || k === "Enter") return "col-span-2 bg-[#333]";
  return "bg-[#333]";
}

function OnScreenKeyboard() {
  return (
    <section
      aria-label="On-Screen Keyboard"
      className="absolute top-[585px] left-[90px] w-[814px] border border-[#a5a5a5] bg-[#1a1a1a] text-xs shadow-[0_3px_10px_rgba(0,0,0,0.35)]"
    >
      <div className="flex h-[30px] items-center bg-white pr-[17px] pl-2">
        <svg viewBox="0 0 16 9" className="h-[9px] w-4" aria-hidden="true">
          <rect width="16" height="9" fill="#1f7ed6" />
          <path d="M1.5 2.5 H15 M1.5 4.5 H15" stroke="#fff" strokeDasharray="1 1" />
          <path d="M2 6.5 h2 M5 6.5 h6 M12 6.5 h2" stroke="#fff" />
        </svg>
        <h2 className="ml-[5px] flex-1 text-[#999]">On-Screen Keyboard</h2>
        <div className="flex gap-[33px]">
          <button aria-label="Minimize keyboard"><MinimizeGlyph /></button>
          <button aria-label="Maximize keyboard" disabled>
            <svg viewBox="0 0 12 12" className="size-3" fill="none" stroke="#e4e4e4"><path d="M1.5 1.5 H10.5 V10.5 H1.5Z" /></svg>
          </button>
          <button aria-label="Close keyboard"><CloseGlyph /></button>
        </div>
      </div>
      <div className="flex gap-1.5 px-px pt-[23px] pb-px">
        <div className="grid grid-rows-[22px_21px_21px_21px_21px] gap-px">
          {typing.map((row, i) => (
            <div key={i} className="flex gap-px">
              {row.map((key, j) => <Key key={j} {...key} />)}
            </div>
          ))}
        </div>
        <div className="grid grid-cols-[66px_68px_68px] grid-rows-[22px_21px_21px_21px_21px] gap-px">
          {navKeys.map((k) => (
            <button key={k} disabled={k === "Dock"} className={`${navTone(k)} flex pl-[5px] leading-[17px]`}>{k}</button>
          ))}
        </div>
        <div className="grid flex-1 grid-cols-[43px_43px_43px_1fr] grid-rows-[22px_21px_21px_21px_21px] gap-px text-white">
          {padKeys.map((k) => (
            <button key={k} className={`${padTone(k)} flex pl-[5px] leading-[17px]`}>{k}</button>
          ))}
        </div>
      </div>
    </section>
  );
}

const pinned = [
  {
    name: "Search",
    icon: <Magnifier className="size-[17px] text-white" />,
  },
  {
    name: "Task View",
    icon: (
      <svg viewBox="0 0 20 14" className="h-3.5 w-5" fill="none" stroke="#fff">
        <path d="M4.5 0.5 H15.5 V13.5 H4.5Z M3 2.5 H0.5 V11.5 H3 M17 2.5 H19.5 V11.5 H17" />
      </svg>
    ),
  },
  {
    name: "Recorder",
    icon: (
      <svg viewBox="0 0 24 24" className="size-6">
        <circle cx="12" cy="12" r="11" fill="#1c1c1c" stroke="#b5b5b5" strokeWidth="1.5" />
        <circle cx="12" cy="12" r="7.5" fill="#e80c0c" stroke="#6d0000" />
      </svg>
    ),
  },
  { name: "Edge", icon: <FaEdgeLegacy size={21} className="text-[#0f78d7]" /> },
  {
    name: "File Explorer",
    icon: (
      <svg viewBox="0 0 22 18" className="h-[18px] w-[22px]">
        <path d="M0 0 H8 L9 2 H22 V17 H0Z" fill="#f8d568" />
        <path d="M1 2 H8" stroke="#e8a33a" />
        <path d="M0 5 H22 V17 H0Z" fill="#fde596" />
        <path d="M4 18 V10 H18 V18 H14 V14 H8 V18Z" fill="#1fa4e4" />
      </svg>
    ),
  },
  {
    name: "Store",
    icon: (
      <svg viewBox="0 0 22 24" className="h-6 w-[22px]">
        <path d="M6 7 V4 Q6 1 10 1 Q14 1 14 4 V6 M9 6 Q9 2.5 13 2.5 Q16 2.5 16 6" fill="none" stroke="#fff" strokeWidth="1.3" />
        <path d="M0 7 L22 5 V24 L0 21Z" fill="#fff" />
        <path d="M5 11 h5 v4 h-5z M11 11 h6 v4 h-6z M5 16 h5 v4 h-5z M11 16 h6 v4.5 h-6z" fill="#000" />
      </svg>
    ),
  },
  {
    name: "Opera",
    icon: (
      <svg viewBox="0 0 24 24" className="size-6">
        <ellipse cx="12" cy="12" rx="11" ry="11.5" fill="#e0182c" />
        <path d="M16 2 Q23 6 23 12 Q23 18 16 22 Q19 12 16 2Z" fill="#a50e1e" />
        <ellipse cx="12" cy="12" rx="5" ry="9" fill="#000" />
      </svg>
    ),
  },
  {
    name: "Chrome",
    icon: (
      <svg viewBox="0 0 22 22" className="size-[22px]">
        <circle cx="11" cy="11" r="11" fill="#fbc116" />
        <path d="M11 11 L1.5 5.5 A11 11 0 0 1 20.5 5.5 L11 6Z" fill="#e33b2e" />
        <path d="M1.5 5.5 A11 11 0 0 0 10.5 22 L15.3 13.5 L6.7 13.5Z" fill="#229a4c" />
        <circle cx="11" cy="11" r="5.2" fill="#fff" />
        <circle cx="11" cy="11" r="4.1" fill="#4285f4" />
      </svg>
    ),
  },
];

function Tray() {
  return (
    <div className="flex items-center text-white">
      <button aria-label="Show hidden icons"><ChevronUp size={18} strokeWidth={1.8} /></button>
      <svg viewBox="0 0 16 16" className="ml-2 size-4" fill="none" stroke="#fff" strokeWidth="1.2">
        <path d="M3 15 A9 9 0 0 1 15 5 M6 15 A6 6 0 0 1 15 8.5 M9 15 A4 4 0 0 1 15 12" />
        <path d="M1 13 A11 11 0 0 1 14 2" stroke="#777" />
        <circle cx="13" cy="14.5" r="0.8" fill="#fff" />
      </svg>
      <svg viewBox="0 0 18 14" className="ml-1.5 h-3.5 w-[18px]" fill="none" stroke="#fff" strokeWidth="1.2">
        <path d="M6 4.5 H15.5 V11.5 H5 M15.5 6.5 H17 V9.5 H15.5 M2 1 V3 M5 1 V3 M1 3.5 H6 V6 L3.5 8 L1 6Z M3.5 8 V13" />
        <path d="M7.5 6.5 H13.5 V9.5 H7.5Z" fill="#fff" />
      </svg>
      <svg viewBox="0 0 18 14" className="ml-[6px] h-3.5 w-[18px]" fill="none" stroke="#fff" strokeWidth="1.2">
        <path d="M1 4.5 H4 L8 1 V13 L4 9.5 H1Z M10.5 4.5 Q12 7 10.5 9.5 M12.5 3 Q15 7 12.5 11 M14.5 1 Q18.5 7 14.5 13" />
      </svg>
      <svg viewBox="0 0 15 15" className="ml-[7px] size-[15px]">
        <path d="M0 0 H15 V11 H8 L4 15 V11 H0Z" fill="#fff" />
        <path d="M3 3.5 H12 M3 5.5 H12 M3 7.5 H12" stroke="#000" />
      </svg>
      <span className="ml-2.5 w-[49px] text-xs">ENG</span>
      <time className="h-9 w-[65px] text-xs leading-[18px]">1:02 CH</time>
    </div>
  );
}

function Watermark() {
  return (
    <div className="absolute right-[10px] bottom-1.5 flex items-center" aria-label="Vforum.vn">
      <svg viewBox="0 0 20 18" className="h-[18px] w-5" aria-hidden="true">
        <path d="M1 3 L17 0 L19 2 V15 L3 18 L1 16Z" fill="#c80f1c" />
        <path d="M4 5 L9 14 L17 2" fill="none" stroke="#fff" strokeWidth="2.8" />
      </svg>
      <span className="ml-px font-['Liberation_Sans',sans-serif] text-lg leading-5 font-bold text-white [-webkit-text-stroke:3px_#111] [paint-order:stroke_fill]">
        Vforum.vn
      </span>
    </div>
  );
}

function Taskbar() {
  return (
    <footer className="mr-[19px] flex h-10 justify-between bg-black">
      <div className="flex">
        <button className="flex w-7 items-center" aria-label="Start">
          <WindowsLogo className="-ml-px size-3.5" />
        </button>
        {pinned.map(({ name, icon }) => (
          <button key={name} aria-label={name} className="flex w-[49px] items-center justify-center">{icon}</button>
        ))}
        <button aria-label="Control Panel window" className="ml-[5px] flex w-10 items-center justify-center border-b-2 border-[#76b9ed] pt-0.5">
          <ControlPanelIcon className="h-4 w-[21px]" />
        </button>
        <button aria-label="On-Screen Keyboard window" className="ml-[5px] flex w-12 items-center justify-center border-b-2 border-[#76b9ed] bg-[#333]">
          <svg viewBox="0 0 24 24" className="size-6">
            <ellipse cx="14" cy="21" rx="6" ry="2.5" fill="#c3c6ca" />
            <path d="M5 1 L21 0 L23 16 L9 19Z" fill="#dfe2e6" />
            <path d="M6.5 2 L20 1.5 L21.5 14.5 L10 17Z" fill="url(#navy)" />
            <rect x="1" y="7" width="16" height="7" fill="#2f7fd0" stroke="#9cc8ee" strokeWidth="0.6" />
            <path d="M2 9.5 H16 M2 11.5 H16" stroke="#fff" strokeDasharray="1 1" />
          </svg>
        </button>
      </div>
      <Tray />
    </footer>
  );
}

export default function App() {
  return (
    <div className="relative flex min-h-screen flex-col overflow-hidden bg-white pb-[3px] font-['Open_Sans',sans-serif]">
      <Gradients />
      <TitleBar />
      <AddressBar />
      <main className="flex-1">
        <Heading />
        <div className="mr-5 h-px bg-linear-to-r from-[#d6e5f5] from-95% to-transparent" />
        <ItemGrid />
      </main>
      <Taskbar />
      <OnScreenKeyboard />
      <Watermark />
    </div>
  );
}
